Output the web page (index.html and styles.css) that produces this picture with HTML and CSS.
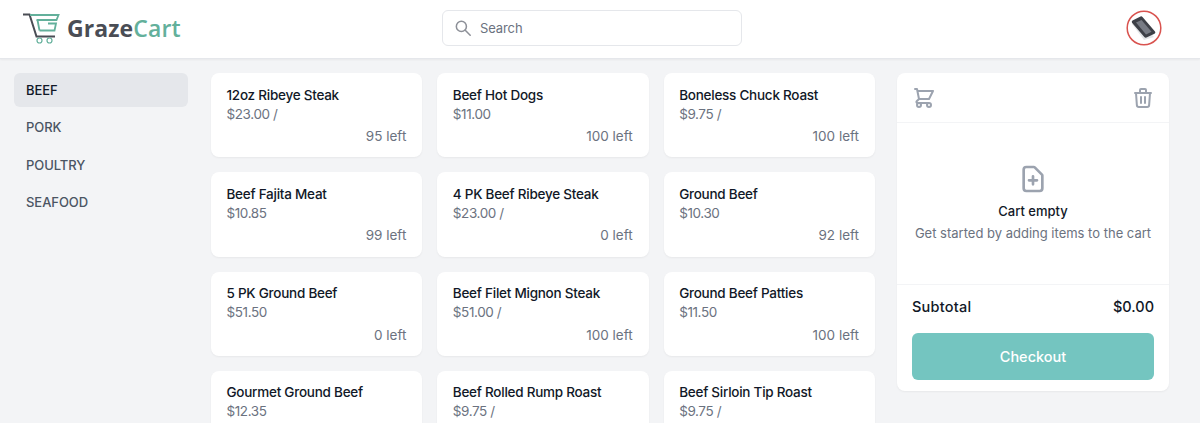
FILE: index.html
```html
<!DOCTYPE html>
<html lang="en">
<head>
<meta charset="utf-8">
<title>GrazeCart</title>
<link rel="stylesheet" href="styles.css">
</head>
<body>
<header class="topbar">
  <a class="brand">
    <svg class="brand-icon" viewBox="0 0 38 32" fill="none">
      <path d="M1 2.500H7.500L14.500 24.500H33" stroke="#4a4d55" stroke-width="2"/>
      <path d="M8 3H36.500L34.500 8H14.500M17.500 18.500H32.500L34 11.500H26" stroke="#63b09b" stroke-width="1.800"/>
      <path d="M15.500 8L17.500 18.500" stroke="#63b09b" stroke-width="1.800"/>
      <circle cx="17.500" cy="28.500" r="2.500" stroke="#63b09b" stroke-width="1.200"/>
      <circle cx="27.500" cy="28.500" r="2.500" stroke="#63b09b" stroke-width="1.200"/>
    </svg>
    <span class="brand-name"><span class="brand-dark">Graze</span><span class="brand-teal">Cart</span></span>
  </a>
  <label class="search">
    <svg class="search-icon" viewBox="0 0 20 20" fill="none" stroke="#8d9098" stroke-width="1.700" stroke-linecap="round"><circle cx="8.200" cy="8.200" r="5.600"/><path d="M12.500 12.500L18 18"/></svg>
    <span class="search-text">Search</span>
  </label>
  <div class="avatar">
    <svg viewBox="0 0 36 36">
      <circle cx="18" cy="18" r="16.800" fill="#fff" stroke="#d9534f" stroke-width="1.500"/>
      <path d="M6 14L18 30L28 27L12 10Z" fill="#e3e5e8"/>
      <path d="M6.500 10.500L14.500 6.500Q15.700 6 16.500 7L29 21.500Q30 23 28.500 23.800L20.500 27.500Q19.200 28 18.300 27L6 12.800Q5.300 11.300 6.500 10.500Z" fill="#3d4047"/>
      <path d="M10 12.500L15.500 10L25.500 21.800L20 24.500Z" fill="#777b84"/>
    </svg>
  </div>
</header>
<main class="layout">
  <nav class="categories">
    <a class="category active">BEEF</a>
    <a class="category">PORK</a>
    <a class="category">POULTRY</a>
    <a class="category">SEAFOOD</a>
  </nav>
  <section class="products">
    <article class="card"><h3>12oz Ribeye Steak</h3><p class="price">$23.00 /</p><p class="stock">95 left</p></article>
    <article class="card"><h3>Beef Hot Dogs</h3><p class="price">$11.00</p><p class="stock">100 left</p></article>
    <article class="card"><h3>Boneless Chuck Roast</h3><p class="price">$9.75 /</p><p class="stock">100 left</p></article>
    <article class="card"><h3>Beef Fajita Meat</h3><p class="price">$10.85</p><p class="stock">99 left</p></article>
    <article class="card"><h3>4 PK Beef Ribeye Steak</h3><p class="price">$23.00 /</p><p class="stock">0 left</p></article>
    <article class="card"><h3>Ground Beef</h3><p class="price">$10.30</p><p class="stock">92 left</p></article>
    <article class="card"><h3>5 PK Ground Beef</h3><p class="price">$51.50</p><p class="stock">0 left</p></article>
    <article class="card"><h3>Beef Filet Mignon Steak</h3><p class="price">$51.00 /</p><p class="stock">100 left</p></article>
    <article class="card"><h3>Ground Beef Patties</h3><p class="price">$11.50</p><p class="stock">100 left</p></article>
    <article class="card"><h3>Gourmet Ground Beef</h3><p class="price">$12.35</p><p class="stock">100 left</p></article>
    <article class="card"><h3>Beef Rolled Rump Roast</h3><p class="price">$9.75 /</p><p class="stock">100 left</p></article>
    <article class="card"><h3>Beef Sirloin Tip Roast</h3><p class="price">$9.75 /</p><p class="stock">100 left</p></article>
  </section>
  <aside class="cart">
    <div class="cart-head">
      <svg class="cart-icon" viewBox="0 0 24 24" fill="none" stroke="#9ca3af" stroke-width="2" stroke-linecap="round" stroke-linejoin="round"><path d="M3 3h2l.4 2M7 13h10l4-8H5.400M7 13L5.400 5M7 13l-2.293 2.293c-.63.63-.184 1.707.707 1.707H17m0 0a2 2 0 100 4 2 2 0 000-4zm-8 2a2 2 0 11-4 0 2 2 0 014 0z"/></svg>
      <svg class="cart-icon" viewBox="0 0 24 24" fill="none" stroke="#9ca3af" stroke-width="2" stroke-linecap="round" stroke-linejoin="round"><path d="M19 7l-.867 12.142A2 2 0 0116.138 21H7.862a2 2 0 01-1.995-1.858L5 7m5 4v6m4-6v6m1-10V4a1 1 0 00-1-1h-4a1 1 0 00-1 1v3M4 7h16"/></svg>
    </div>
    <div class="cart-empty">
      <svg class="empty-icon" viewBox="0 0 24 24" fill="none" stroke="#9ca3af" stroke-width="2" stroke-linecap="round" stroke-linejoin="round"><path d="M9 13h6m-3-3v6m5 5H7a2 2 0 01-2-2V5a2 2 0 012-2h5.586a1 1 0 01.707.293l5.414 5.414a1 1 0 01.293.707V19a2 2 0 01-2 2z"/></svg>
      <h4>Cart empty</h4>
      <p>Get started by adding items to the cart</p>
    </div>
    <div class="cart-foot">
      <div class="subtotal"><span class="subtotal-label">Subtotal</span><span>$0.00</span></div>
      <button class="checkout" type="button">Checkout</button>
    </div>
  </aside>
</main>
</body>
</html>
```
FILE: styles.css
```css
* { box-sizing: border-box; }
html, body { height: 100%; }
body {
  margin: 0;
  overflow: hidden;
  background: #f3f4f6;
  font-family: Inter, "Liberation Sans", sans-serif;
  color: #111827;
}
h3, h4, p { margin: 0; }

.topbar {
  height: 59px;
  background: #fff;
  border-bottom: 1px solid #e5e7eb;
  box-shadow: 0 1px 2px rgba(0,0,0,.05);
  display: grid;
  grid-template-columns: 420px 300px 1fr;
  align-items: center;
  padding: 0 38px 2px 22px;
}
.brand { display: flex; align-items: center; gap: 7px; }
.brand-icon { width: 38px; height: 32px; flex: none; margin-top: -1px; }
.brand-name { font-family: "Open Sans", sans-serif; font-weight: 700; font-size: 23px; line-height: 1; letter-spacing: .1px; }
.brand-dark { color: #4a4d55; }
.brand-teal { color: #63b09b; font-weight: 600; }

.search {
  height: 36px;
  border: 1px solid #e5e7eb;
  border-radius: 6px;
  display: flex;
  align-items: center;
  gap: 8px;
  padding-left: 11px;
  background: #fff;
}
.search-icon { width: 18px; height: 18px; }
.search-text { font-size: 13px; color: #6b7280; letter-spacing: -.1px; }

.avatar { justify-self: end; width: 36px; height: 36px; margin-top: -1px; }
.avatar svg { display: block; width: 36px; height: 36px; }

.layout {
  display: grid;
  grid-template-columns: 174px 664px 272px;
  column-gap: 23px;
  padding: 14px 31px 0 14px;
  align-items: start;
}
.categories { display: flex; flex-direction: column; gap: 3.400px; }
.category {
  height: 34px;
  padding: 0 12px;
  display: flex;
  align-items: center;
  border-radius: 6px;
  font-size: 13px;
  font-weight: 500;
  color: #4b5563;
  letter-spacing: -.05px;
}
.category.active { background: #e5e7eb; color: #111827; }

.products {
  display: grid;
  grid-template-columns: repeat(3, 1fr);
  gap: 15px;
}
.card {
  height: 84.300px;
  background: #fff;
  border-radius: 8px;
  box-shadow: 0 1px 2px rgba(0,0,0,.05);
  padding: 11.500px 16px 11.500px 15.500px;
}
.card h3 { font-size: 13.500px; line-height: 20px; font-weight: 500; color: #111827; letter-spacing: -.25px; }
.price { font-size: 13.500px; line-height: 18px; color: #6b7280; letter-spacing: -.4px; }
.stock { font-size: 13.500px; line-height: 20px; color: #6b7280; text-align: right; margin-top: 3.500px; }

.cart {
  margin-left: -1px;
  margin-right: 1px;
  height: 318px;
  background: #fff;
  border-radius: 8px;
  box-shadow: 0 1px 2px rgba(0,0,0,.05);
  display: flex;
  flex-direction: column;
}
.cart-head {
  height: 50px;
  border-bottom: 1px solid #f3f4f6;
  display: flex;
  align-items: center;
  justify-content: space-between;
  padding: 0 14px 0 15px;
}
.cart-icon { width: 24px; height: 24px; }
.cart-empty {
  height: 162px;
  border-bottom: 1px solid #f3f4f6;
  display: flex;
  flex-direction: column;
  align-items: center;
  padding-top: 40px;
}
.empty-icon { width: 32px; height: 32px; }
.cart-empty h4 { font-size: 13px; line-height: 20px; font-weight: 500; color: #111827; margin-top: 6px; }
.cart-empty p { font-size: 13px; line-height: 20px; color: #6b7280; margin-top: 2px; }
.cart-foot { padding: 12px 15px 0; }
.subtotal {
  display: flex;
  justify-content: space-between;
  font-size: 14.500px;
  line-height: 20px;
  font-weight: 500;
  color: #111827;
}
.subtotal-label { letter-spacing: .25px; }
.checkout {
  display: block;
  width: 100%;
  height: 47px;
  margin-top: 16px;
  border: 0;
  border-radius: 6px;
  background: #74c5c0;
  color: #fff;
  font: 500 14.500px Inter, "Liberation Sans", sans-serif;
}
```
